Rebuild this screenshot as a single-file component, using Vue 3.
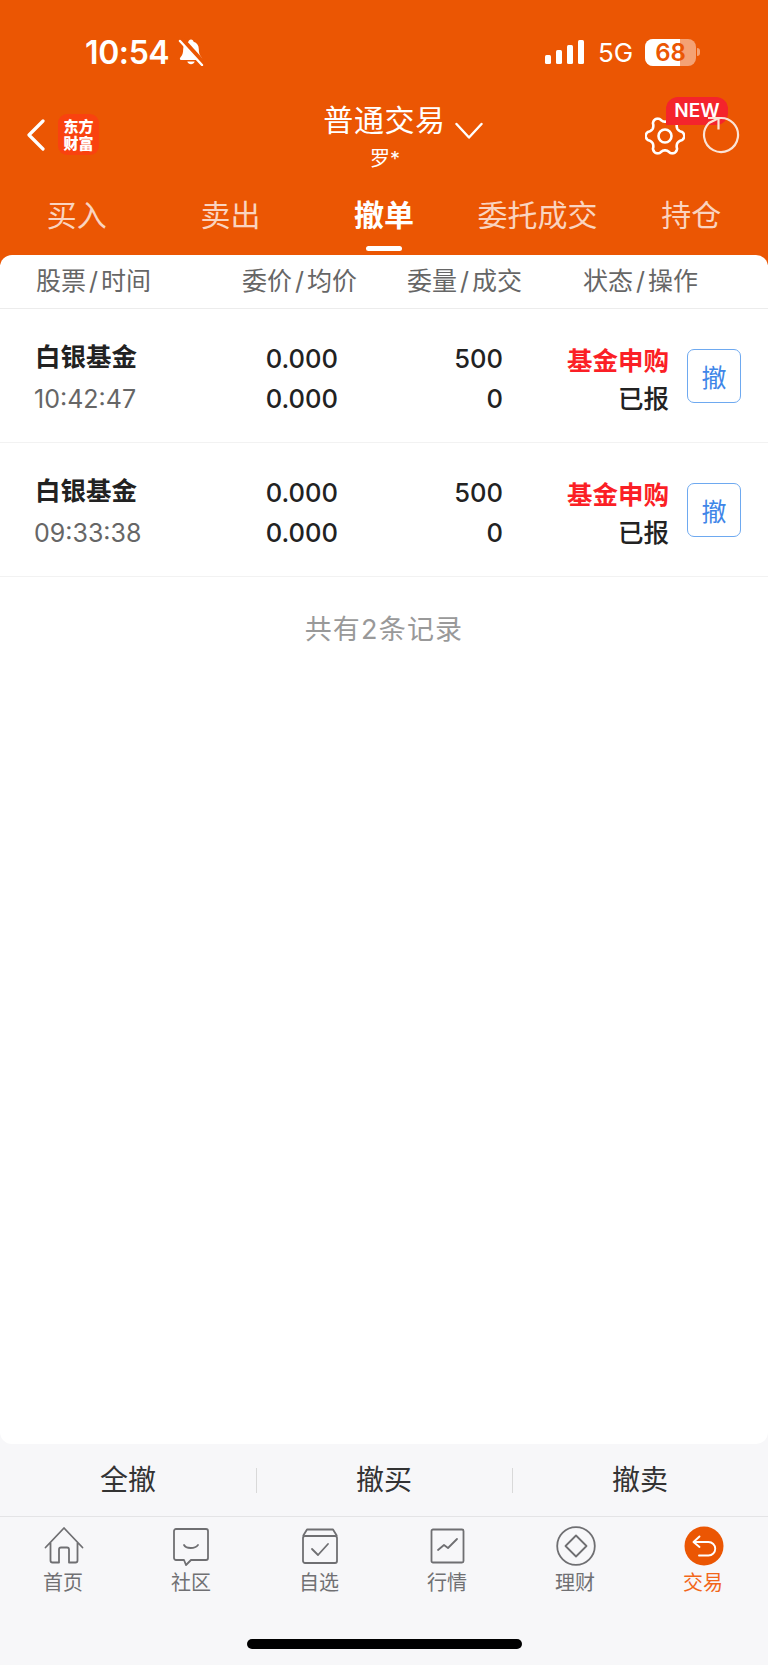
<script setup>
const tabs = [
  { label: '买入' },
  { label: '卖出' },
  { label: '撤单', active: true },
  { label: '委托成交' },
  { label: '持仓' },
]
const heads = [
  ['股票', '时间'],
  ['委价', '均价'],
  ['委量', '成交'],
  ['状态', '操作'],
]
const rows = [
  { name: '白银基金', time: '10:42:47' },
  { name: '白银基金', time: '09:33:38' },
]
const actions = ['全撤', '撤买', '撤卖']

const points = []
for (let i = 0; i < 180; i++) {
  const a = (i / 180) * Math.PI * 2
  const c = Math.cos(6 * a)
  const r = 16.8 + 2.5 * Math.sign(c) * Math.pow(Math.abs(c), 0.7)
  points.push(`${(20 + r * Math.cos(a)).toFixed(2)} ${(20 + r * Math.sin(a)).toFixed(2)}`)
}
const gearPath = 'M' + points.join('L') + 'Z'
</script>

<template>
  <div class="page">
    <header class="top">
      <div class="status">
        <div class="status-left">
          <span class="clock">10:54</span>
          <svg class="bell" width="26" height="28" viewBox="0 0 26 28">
            <path d="M13 1.500c-1.500 0-2.500 1-2.600 2.300C7 4.800 5.200 7.500 5.200 11c0 4-.9 6.300-2.700 8.200-1 1.100-1 2.800.8 2.800h19.400c1.800 0 1.800-1.700.8-2.800C21.700 17.300 20.800 15 20.800 11c0-3.500-1.800-6.200-5.200-7.200C15.500 2.500 14.500 1.500 13 1.500z" fill="#fff"/>
            <path d="M9.300 23.500c.6 1.800 2 2.800 3.700 2.800s3.100-1 3.700-2.800z" fill="#fff"/>
            <path d="M3.500 1.200L25 25" stroke="#eb5603" stroke-width="5.500"/>
            <path d="M2 3l22 24" stroke="#fff" stroke-width="2.400" stroke-linecap="round"/>
          </svg>
        </div>
        <div class="status-right">
          <div class="signal">
            <i class="b1"></i><i class="b2"></i><i class="b3"></i><i class="b4"></i>
          </div>
          <span class="net">5G</span>
          <div class="battery">
            <div class="battery-body"><div class="battery-fill"></div><span class="battery-num">68</span></div>
            <div class="battery-nub"></div>
          </div>
        </div>
      </div>

      <div class="nav">
        <div class="nav-left">
          <svg width="20" height="32" viewBox="0 0 20 32">
            <path d="M17 2L3 16l14 14" fill="none" stroke="#fff" stroke-width="3.200" stroke-linecap="round" stroke-linejoin="round"/>
          </svg>
          <div class="logo"><span>东方</span><span>财富</span></div>
        </div>
        <div class="nav-title">
          <div class="title-line">
            <span class="title">普通交易</span>
            <svg class="caret" width="28" height="18" viewBox="0 0 28 18">
              <path d="M1.500 2L14 15.500 26.500 2" fill="none" stroke="#fff" stroke-width="2.400" stroke-linecap="round" stroke-linejoin="round"/>
            </svg>
          </div>
          <div class="account">罗*</div>
        </div>
        <div class="nav-right">
          <svg width="40" height="40" viewBox="0 0 40 40">
            <path :d="gearPath" fill="none" stroke="#fff" stroke-width="2.600" stroke-linejoin="round"/>
            <circle cx="20" cy="20" r="6.500" fill="none" stroke="#fff" stroke-width="2.600"/>
          </svg>
          <div class="refresh">
            <span class="new">NEW</span>
            <svg class="refresh-icon" width="44" height="50" viewBox="0 0 44 50">
              <path d="M19.500 14.200A17 17 0 1 1 10 19L19.500 14.200" fill="none" stroke="#fbe3d6" stroke-width="2.200"/>
              <path d="M9 14h10.500v11.500" fill="none" stroke="#fbe3d6" stroke-width="2.200"/>
            </svg>
          </div>
        </div>
      </div>

      <nav class="tabs">
        <div v-for="t in tabs" :key="t.label" class="tab" :class="{ active: t.active }">{{ t.label }}</div>
      </nav>
    </header>

    <main class="panel">
      <div class="thead">
        <span v-for="h in heads" :key="h[0]">{{ h[0] }}<i class="slash">/</i>{{ h[1] }}</span>
      </div>
      <div v-for="r in rows" :key="r.time" class="row">
        <div class="cell-name">
          <div class="name">{{ r.name }}</div>
          <div class="time">{{ r.time }}</div>
        </div>
        <div class="cell-num"><div>0.000</div><div>0.000</div></div>
        <div class="cell-num"><div>500</div><div>0</div></div>
        <div class="cell-status">
          <div class="kind">基金申购</div>
          <div class="state">已报</div>
        </div>
        <button class="cancel">撤</button>
      </div>
      <div class="total">共有2条记录</div>
    </main>

    <footer class="bottom">
      <div class="actions">
        <div v-for="a in actions" :key="a" class="action">{{ a }}</div>
      </div>
      <div class="bar">
        <div class="bar-item">
          <svg width="40" height="40" viewBox="0 0 40 40">
            <path d="M1.500 21.500L20 2l18.500 19.500M6.500 17v17.500a2 2 0 0 0 2 2h6.500V23.500a2 2 0 0 1 2-2h6a2 2 0 0 1 2 2v13h6.500a2 2 0 0 0 2-2V17" fill="none" stroke="#6f6f72" stroke-width="1.800" stroke-linecap="round" stroke-linejoin="round"/>
          </svg>
          <span>首页</span>
        </div>
        <div class="bar-item">
          <svg width="40" height="40" viewBox="0 0 40 40">
            <path d="M4 3h30a2 2 0 0 1 2 2v27a2 2 0 0 1-2 2H19l-5 5-2-5H4a2 2 0 0 1-2-2V5a2 2 0 0 1 2-2z" fill="none" stroke="#6f6f72" stroke-width="1.800" stroke-linejoin="round"/>
            <path d="M12 19c2 4 11 4 14 0" fill="none" stroke="#6f6f72" stroke-width="1.800" stroke-linecap="round"/>
          </svg>
          <span>社区</span>
        </div>
        <div class="bar-item">
          <svg width="40" height="40" viewBox="0 0 40 40">
            <path d="M3 10L7 3.500h26L37 10" fill="none" stroke="#6f6f72" stroke-width="1.800" stroke-linejoin="round"/>
            <rect x="3" y="10" width="34" height="27" rx="2" fill="none" stroke="#6f6f72" stroke-width="1.800"/>
            <path d="M12 23l6 6 10-11" fill="none" stroke="#6f6f72" stroke-width="1.800" stroke-linecap="round" stroke-linejoin="round"/>
          </svg>
          <span>自选</span>
        </div>
        <div class="bar-item">
          <svg width="40" height="40" viewBox="0 0 40 40">
            <rect x="3.500" y="3.500" width="32" height="33" rx="1.500" fill="none" stroke="#6f6f72" stroke-width="1.800"/>
            <path d="M10 24l6-5 4 3 9-9" fill="none" stroke="#6f6f72" stroke-width="1.800" stroke-linecap="round" stroke-linejoin="round"/>
          </svg>
          <span>行情</span>
        </div>
        <div class="bar-item">
          <svg width="40" height="40" viewBox="0 0 40 40">
            <circle cx="20" cy="20" r="18.800" fill="none" stroke="#6f6f72" stroke-width="1.800"/>
            <path d="M20 9.500L30.500 20 20 30.500 9.500 20z" fill="none" stroke="#6f6f72" stroke-width="1.800" stroke-linejoin="round"/>
          </svg>
          <span>理财</span>
        </div>
        <div class="bar-item on">
          <svg width="40" height="40" viewBox="0 0 40 40">
            <circle cx="20" cy="20" r="19.500" fill="#eb5603"/>
            <path d="M15.500 10.500L9.500 16l6 5M10 16h14.500a6.500 6.500 0 0 1 0 13.500H15" fill="none" stroke="#fff" stroke-width="1.900" stroke-linecap="round" stroke-linejoin="round"/>
          </svg>
          <span>交易</span>
        </div>
      </div>
      <div class="home"></div>
    </footer>
  </div>
</template>

<style>
html, body { margin: 0; background: #f7f7f9; }
</style>

<style scoped>
.page {
  width: 768px;
  height: 1665px;
  display: flex;
  flex-direction: column;
  overflow: hidden;
  background: #f7f7f9;
  font-family: Inter, "Noto Sans CJK SC", sans-serif;
}
.top { background: #eb5603; height: 265px; flex: none; color: #fff; }
.status {
  height: 104px;
  display: flex;
  justify-content: space-between;
  align-items: center;
  box-sizing: border-box;
  padding: 0 68px 0 85px;
}
.status-left { display: flex; align-items: center; gap: 9px; }
.clock { font-size: 32px; font-weight: 600; line-height: 40px; letter-spacing: -0.4px; margin-top: 2px; }
.bell { display: block; }
.status-right { display: flex; align-items: center; }
.signal { display: flex; align-items: flex-end; gap: 5px; height: 24px; }
.signal i { width: 6px; background: #fff; border-radius: 1.500px; display: block; }
.b1 { height: 9px; }
.b2 { height: 14px; }
.b3 { height: 19px; }
.b4 { height: 24px; }
.net { font-size: 26px; margin-left: 14px; width: 47px; line-height: 32px; margin-top: 2px; }
.battery { display: flex; align-items: center; gap: 1px; }
.battery-body {
  position: relative;
  width: 51px;
  height: 27px;
  border-radius: 8px;
  overflow: hidden;
  background: rgba(255, 255, 255, 0.45);
}
.battery-fill { width: 35px; height: 100%; background: #fff; }
.battery-num {
  position: absolute;
  inset: 0;
  text-align: center;
  line-height: 27px;
  font-size: 24px;
  font-weight: 600;
  color: #eb5603;
}
.battery-nub { width: 3px; height: 8px; border-radius: 0 3px 3px 0; background: rgba(255, 255, 255, 0.45); }

.nav {
  height: 76px;
  display: grid;
  grid-template-columns: 1fr auto 1fr;
  align-items: start;
  box-sizing: border-box;
  padding-left: 26px;
}
.nav-left { display: flex; align-items: center; gap: 12px; padding-top: 10px; }
.nav-left svg { display: block; }
.logo {
  width: 41px;
  height: 41px;
  border-radius: 9px;
  background: #f9420f;
  display: flex;
  flex-direction: column;
  align-items: center;
  justify-content: center;
  font-size: 15px;
  font-weight: 900;
  line-height: 17px;
}
.logo span { display: block; }
.nav-title { text-align: center; padding-left: 12px; }
.title-line { display: flex; align-items: flex-start; height: 36px; gap: 9px; margin-top: -2px; }
.title { font-size: 30px; line-height: 36px; letter-spacing: 0.6px; }
.caret { display: block; margin-top: 20px; }
.account { font-size: 20px; line-height: 24px; margin-top: 9px; padding-right: 36px; }
.nav-right { display: flex; justify-content: flex-end; align-items: flex-start; padding: 12px 25px 0 0; gap: 14px; }
.nav-right > svg { display: block; }
.refresh { position: relative; width: 44px; height: 40px; }
.new {
  position: absolute;
  left: -33px;
  top: -19px;
  width: 62px;
  height: 28px;
  border-radius: 12px 12px 12px 0;
  background: #f4242c;
  color: #fff;
  font-size: 19px;
  font-weight: 600;
  line-height: 28px;
  text-align: center;
}
.refresh-icon { position: absolute; left: 0; top: -12px; display: block; }

.tabs { display: grid; grid-template-columns: repeat(5, 1fr); height: 75px; }
.tab {
  position: relative;
  text-align: center;
  font-size: 30px;
  line-height: 36px;
  padding-top: 17px;
  color: rgba(255, 255, 255, 0.75);
}
.tab.active { color: #fff; font-weight: 700; }
.tab.active::after {
  content: "";
  position: absolute;
  left: 50%;
  top: 66px;
  width: 36px;
  height: 5px;
  margin-left: -18px;
  border-radius: 3px;
  background: #fff;
}

.panel {
  flex: 1;
  margin-top: -10px;
  position: relative;
  background: #fff;
  border-radius: 12px;
  min-height: 0;
}
.thead {
  height: 54px;
  box-sizing: border-box;
  border-bottom: 1px solid #ececec;
  display: grid;
  grid-template-columns: 206px 165px 176px 1fr;
  padding-left: 36px;
  font-size: 25px;
  line-height: 53px;
  color: #666;
  white-space: nowrap;
}
.slash { font-style: normal; margin: 0 3px; }
.row {
  height: 134px;
  box-sizing: border-box;
  border-bottom: 1px solid #f2f2f2;
  display: grid;
  grid-template-columns: 182px 120px 165px 166px 72px;
  align-items: center;
  padding-left: 36px;
  color: #222;
  font-size: 25.500px;
  line-height: 40px;
  font-weight: 500;
}
.row > div { padding-top: 7px; }
.row > .cell-num { padding-top: 6px; }
.cell-name { white-space: nowrap; }
.name { font-size: 25.500px; font-weight: 700; margin-left: -1px; position: relative; top: -2px; }
.time { color: #666; font-size: 25px; font-weight: 400; margin-left: -2px; }
.cell-num { text-align: right; }
.cell-status { text-align: right; font-size: 25.500px; }
.kind { color: #fb1f26; font-weight: 700; position: relative; top: 2px; }
.state { color: #222; font-weight: 500; }
.cancel {
  width: 54px;
  height: 54px;
  margin-left: 18px;
  padding: 0;
  box-sizing: border-box;
  background: #fff;
  border: 1px solid #6ea9f0;
  border-radius: 7px;
  color: #3f86e8;
  font-family: inherit;
  font-size: 25px;
}
.total {
  text-align: center;
  font-size: 27px;
  letter-spacing: 1.200px;
  color: #999;
  line-height: 40px;
  margin-top: 33px;
}

.bottom { flex: none; height: 221px; background: #f7f7f9; display: flex; flex-direction: column; align-items: stretch; }
.actions {
  height: 73px;
  box-sizing: border-box;
  border-bottom: 1px solid #e4e4e6;
  display: grid;
  grid-template-columns: repeat(3, 1fr);
  align-items: center;
}
.action { position: relative; text-align: center; font-size: 28px; line-height: 36px; color: #333; }
.action + .action::before {
  content: "";
  position: absolute;
  left: 0;
  top: 6px;
  width: 1px;
  height: 25px;
  background: #d9d9d9;
}
.bar { display: grid; grid-template-columns: repeat(6, 128px); padding-top: 9px; }
.bar-item { display: flex; flex-direction: column; align-items: center; font-size: 20px; color: #707073; }
.bar-item svg { display: block; }
.bar-item span { line-height: 26px; margin-top: 4px; margin-right: 2px; }
.bar-item.on { color: #f2661a; }
.home {
  width: 275px;
  height: 10px;
  border-radius: 5px;
  background: #000;
  margin: 43px auto 0;
}
</style>
